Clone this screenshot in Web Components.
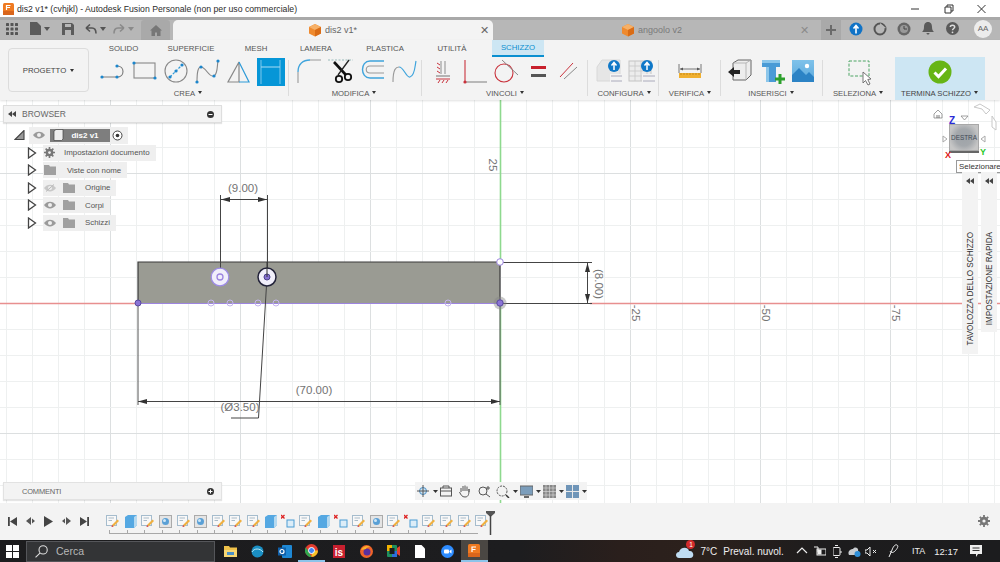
<!DOCTYPE html>
<html lang="it"><head><meta charset="utf-8"><title>Fusion</title>
<style>
html,body{margin:0;padding:0;width:1000px;height:562px;overflow:hidden;background:#fff;font-family:"Liberation Sans",Arial,sans-serif;}
#app{display:flex;flex-direction:column;width:1000px;height:562px}
</style></head><body>
<div id="app">
<title-bar></title-bar>
<tab-bar></tab-bar>
<fusion-toolbar>
  <tool-group label="CREA" w="192" pad="0" lab="182" icons="line rect circle spline tri dim"></tool-group>
  <tool-group label="MODIFICA" w="133" pad="5" lab="130" sep icons="fillet scissors offset wave"></tool-group>
  <tool-group label="VINCOLI" w="166" pad="5" lab="166" sep icons="hatch perp tangent equal parallel"></tool-group>
  <tool-group label="CONFIGURA" w="71" pad="6" lab="72" sep icons="conf1 conf2"></tool-group>
  <tool-group label="VERIFICA" w="62" pad="15" lab="62" sep icons="ruler"></tool-group>
  <tool-group label="INSERISCI" w="102" pad="3" lab="100" sep icons="insert bolt image"></tool-group>
  <tool-group label="SELEZIONA" w="72" pad="19" lab="70" sep icons="select"></tool-group>
  <tool-group label="TERMINA SCHIZZO" w="90" pad="29" lab="89" active icons="finish"></tool-group>
</fusion-toolbar>
<cad-canvas>
  <browser-panel></browser-panel>
  <comments-panel></comments-panel>
  <nav-cube></nav-cube>
  <side-tab label="TAVOLOZZA DELLO SCHIZZO" x="962" h="182" pad="9"></side-tab>
  <side-tab label="IMPOSTAZIONE RAPIDA" x="981" h="160" pad="7"></side-tab>
  <nav-bar></nav-bar>
</cad-canvas>
<time-line></time-line>
<task-bar></task-bar>
</div>
<script>
const def=(n,c)=>customElements.define(n,c);
const shadow=(el,html)=>{el.attachShadow({mode:'open'}).innerHTML=html;};
const FONT='font-family:"Liberation Sans",Arial,sans-serif;';
const B='#2f9bd8',G='#6f6f6f',D='#3fa4dc',R='#c9323c';
const dot=(x,y,r=1.6,c='#1c86cc')=>`<circle cx="${x}" cy="${y}" r="${r}" fill="${c}"/>`;
const ICONS={
line:`<path d="M5 20H20" stroke="#888" stroke-width="1.1" fill="none"/><path d="M20 9C28 9 28 20 20 20" stroke="#777" stroke-width="1.1" fill="none"/>${dot(5,20)}${dot(20,20)}${dot(20,9)}`,
rect:`<rect x="5" y="6" width="21" height="15" fill="none" stroke="#888" stroke-width="1.1"/>${dot(5,6)}${dot(26,21)}`,
circle:`<circle cx="16" cy="14" r="11" fill="none" stroke="#888" stroke-width="1.1"/><path d="M10 20L22 8" stroke="${B}" stroke-width="1.2" stroke-dasharray="2.5 1.5"/>${dot(10,20)}${dot(16,14)}${dot(22,8)}`,
spline:`<path d="M5 25C5 15 6 10 9 10C14 10 17 21 22 19C26 17 25 8 26 4" fill="none" stroke="#888" stroke-width="1.1"/>${dot(5,25)}${dot(9,10)}${dot(22,19)}${dot(26,4)}`,
tri:`<path d="M16 5L5 25H16Z" fill="none" stroke="#888" stroke-width="1.2"/><path d="M16 5L26 25H16" fill="none" stroke="${B}" stroke-width="1.2"/>`,
dim:`<rect x="0" y="1" width="28" height="28" fill="#0696d7"/><path d="M4 3V27M23 3V27" stroke="#7cc8ec" stroke-width="1"/><path d="M4 10H23" stroke="#a8dcf5" stroke-width="1"/>`,
fillet:`<path d="M4 15C4 7 9 3 16 3" fill="none" stroke="${D}" stroke-width="1.3"/><path d="M4 15V26M16 3H27" fill="none" stroke="#999" stroke-width="1.1"/>`,
scissors:`<path d="M2 3H27" stroke="#9bb" stroke-width="1" stroke-dasharray="2 1.5"/><path d="M8 5L20 18" stroke="#111" stroke-width="2.6"/><path d="M23 3L12 18" stroke="#222" stroke-width="1.3"/><circle cx="13" cy="22" r="3.2" fill="none" stroke="#111" stroke-width="1.8"/><circle cx="22" cy="20" r="3.2" fill="none" stroke="#111" stroke-width="1.8"/>`,
offset:`<path d="M27 4H13C3 4 3 21 13 21H27" fill="none" stroke="${D}" stroke-width="1.4"/><path d="M27 9H13C8 9 8 16 13 16H27" fill="none" stroke="#999" stroke-width="1.1"/>`,
wave:`<path d="M4 25C4 12 7 10 10 10" fill="none" stroke="#999" stroke-width="1.1"/><path d="M10 10C15 10 17 21 21 20C26 19 26 8 27 4" fill="none" stroke="${D}" stroke-width="1.2"/>`,
hatch:`<path d="M14 4V17M18 4V17" stroke="#aaa" stroke-width="1.4"/><path d="M10 6L13 8M10 10L13 12M10 14L13 16" stroke="${R}" stroke-width="1"/><path d="M9 19H23" stroke="#888" stroke-width="1.2"/><path d="M9 22H23" stroke="${R}" stroke-width="1"/><path d="M11 26L13 23M15 26L17 23M19 26L21 23" stroke="${R}" stroke-width="1"/>`,
perp:`<path d="M6 3V25" stroke="${R}" stroke-width="1.1"/><path d="M6 25H28" stroke="#888" stroke-width="1.1"/><circle cx="6" cy="25" r="1.6" fill="${R}"/>`,
tangent:`<circle cx="14" cy="16" r="9" fill="none" stroke="${R}" stroke-width="1.1"/><path d="M12 3L28 18" stroke="#888" stroke-width="1"/>`,
equal:`<rect x="9" y="9" width="15" height="3" fill="#c8202c"/><rect x="9" y="17" width="15" height="3" fill="#555"/>`,
parallel:`<path d="M7 20L20 6" stroke="${R}" stroke-width="1"/><path d="M11 22L24 10" stroke="#888" stroke-width="1"/>`,
conf1:`<path d="M3 10L8 3H26V24H3Z" fill="#e6e6e6" stroke="#d8d8d8"/><rect x="16" y="17" width="13" height="10" fill="#f3f3f3"/><path d="M17 19H28M17 24H28" stroke="#aab" stroke-width="1"/><circle cx="20" cy="9" r="6" fill="#0f78c8"/><path d="M20 13V6M17.5 8.5L20 5.5L22.5 8.5" stroke="#fff" stroke-width="1.5" fill="none"/>`,
conf2:`<rect x="3" y="4" width="22" height="20" fill="#ececec" stroke="#c4c4c4"/><path d="M3 9H25M3 14H25M3 19H25M9 4V24M15 4V24M21 4V24" stroke="#c8c8c8" stroke-width=".8"/><rect x="16" y="17" width="13" height="10" fill="#f3f3f3"/><path d="M17 19H29M17 24H29" stroke="#aab" stroke-width="1"/><circle cx="21" cy="9" r="6" fill="#0f78c8"/><path d="M21 13V6M18.5 8.5L21 5.5L23.5 8.5" stroke="#fff" stroke-width="1.5" fill="none"/>`,
ruler:`<path d="M5 7V16M27 7V16M6 12H26" stroke="#777" stroke-width="1"/><path d="M6 12L9 10.5V13.5ZM26 12L23 10.5V13.5Z" fill="#555"/><rect x="5" y="16" width="22" height="5" fill="#f0b030"/><path d="M7 16V18M10 16V18M13 16V18M16 16V18M19 16V18M22 16V18M25 16V18" stroke="#b57c10" stroke-width=".7"/>`,
insert:`<path d="M9 6L14 3H27V18L22 23H9Z" fill="#ededed" stroke="#666" stroke-width="1"/><path d="M9 6H22V23M22 6L27 3" fill="none" stroke="#aaa" stroke-width=".8"/><path d="M4 15L10 10V13H16V17H10V20Z" fill="#222"/>`,
bolt:`<path d="M6 3H24V10H20V25H10V10H6Z" fill="#4a9bd6"/><rect x="6" y="3" width="18" height="3" fill="#8cc6ea"/><rect x="10" y="10" width="3" height="15" fill="#8cc6ea"/><path d="M19 22H29M24 17V27" stroke="#2ca02c" stroke-width="3"/>`,
image:`<defs><linearGradient id="sk" x1="0" y1="0" x2="0" y2="1"><stop offset="0" stop-color="#7fc2ea"/><stop offset="1" stop-color="#5aa8dc"/></linearGradient></defs><rect x="5" y="3" width="22" height="22" fill="url(#sk)"/><circle cx="20" cy="9" r="2.2" fill="#fff"/><path d="M5 25V18L12 11L19 18L22 15L27 20V25Z" fill="#2c83c5"/>`,
select:`<rect x="7" y="4" width="20" height="15" fill="none" stroke="#4da565" stroke-width="1" stroke-dasharray="3 1.6"/><path d="M21 15V26L23.5 23.5L26 28L28 27L25.8 22.5L29 22Z" fill="#fff" stroke="#666" stroke-width=".9"/>`,
finish:`<circle cx="16" cy="15" r="11.5" fill="#67b515"/><path d="M10.5 15.5L14.5 19.5L22 11.5" stroke="#fff" stroke-width="3" fill="none"/>`
};
def('title-bar',class extends HTMLElement{connectedCallback(){shadow(this,`<style>
:host{display:flex;align-items:center;height:17px;background:#fff;flex:none;${FONT}font-size:8.7px;color:#2b2b2b;position:relative}
svg{margin-left:3px;margin-right:3px;flex:none}
span{flex:1;white-space:nowrap}
.c{display:flex;gap:0}
.c svg{margin:0;width:33px;height:14px}
</style><svg width="11" height="12" viewBox="0 0 11 12"><rect width="11" height="12" rx="1.5" fill="#ef7a21"/><rect y="8" width="11" height="4" fill="#d9651b"/><path d="M3.5 7V2.5H7.5M3.5 4.5H7" stroke="#fff" stroke-width="1.2" fill="none"/></svg><span>dis2 v1* (cvhjkl) - Autodesk Fusion Personale (non per uso commerciale)</span>
<div class="c"><svg viewBox="0 0 33 14"><path d="M12 7H20" stroke="#333"/></svg><svg viewBox="0 0 33 14"><path d="M13 5H19V11H13ZM15 5V3H21V9H19" stroke="#333" fill="none"/></svg><svg viewBox="0 0 33 14" style="margin-right:2px"><path d="M12.5 3L20.5 11M20.5 3L12.5 11" stroke="#333"/></svg></div>`);}});
def('tab-bar',class extends HTMLElement{connectedCallback(){
const cube=`<svg width="14" height="14" viewBox="0 0 14 14"><path d="M7 1L13 4V10.5L7 13.5L1 10.5V4Z" fill="#ef8a2e"/><path d="M7 1L13 4L7 7L1 4Z" fill="#f6b067"/><path d="M7 7L13 4V10.5L7 13.5Z" fill="#d96c16"/></svg>`;
const caret=`<svg width="6" height="4" viewBox="0 0 6 4"><path d="M0 0H6L3 4Z" fill="#555"/></svg>`;
shadow(this,`<style>
:host{display:flex;align-items:center;height:23px;flex:none;background:linear-gradient(#a9a9a9 0,#a9a9a9 3px,#b7b7b7 3px);${FONT}color:#666;font-size:9px}
.i{display:flex;align-items:center;gap:3px;flex:none}
.home{width:29px;height:20px;margin:3px 0 0 7px;background:#a9a9a9;display:flex;align-items:center;justify-content:center;flex:none;border-radius:3px 3px 0 0}
.tab{width:320px;height:20px;margin:3px 0 0 3px;display:flex;align-items:center;justify-content:center;gap:3px;background:#f3f3f3;border-radius:5px 5px 0 0;position:relative;flex:none;box-sizing:border-box;padding-right:1px}
.t2{background:transparent;margin-left:0;width:328px;justify-content:flex-start;padding-left:128px}
.x{position:absolute;right:4px;top:3px;font-size:11px;color:#666;line-height:14px}
.t2 .x{right:12px;color:#8a8a8a}
.t2 .t{color:#7a7a7a}
.plus{width:20px;height:20px;margin-top:3px;background:#a9a9a9;display:flex;align-items:center;justify-content:center;flex:none}
.aa{width:18px;height:18px;border-radius:50%;background:#ececec;display:flex;align-items:center;justify-content:center;font-size:8px;color:#666;margin-left:15px;flex:none}
</style>
<div class="i" style="margin-left:6px"><svg width="12" height="12" viewBox="0 0 12 12" fill="#555"><rect width="3" height="3" rx=".6"/><rect x="4.5" width="3" height="3" rx=".6"/><rect x="9" width="3" height="3" rx=".6"/><rect y="4.5" width="3" height="3" rx=".6"/><rect x="4.5" y="4.5" width="3" height="3" rx=".6"/><rect x="9" y="4.5" width="3" height="3" rx=".6"/><rect y="9" width="3" height="3" rx=".6"/><rect x="4.5" y="9" width="3" height="3" rx=".6"/><rect x="9" y="9" width="3" height="3" rx=".6"/></svg></div>
<div class="i" style="margin-left:12px"><svg width="11" height="13" viewBox="0 0 11 13"><path d="M0 0H7L11 4V13H0Z" fill="#5c5c5c"/></svg>${caret}</div>
<div class="i" style="margin-left:12px"><svg width="12" height="12" viewBox="0 0 12 12"><path d="M0 0H10L12 2V12H0Z" fill="#5c5c5c"/><rect x="3" y="1" width="6" height="3" fill="#b7b7b7"/><rect x="3" y="7" width="6" height="5" fill="#b7b7b7"/></svg></div>
<div class="i" style="margin-left:11px"><svg width="12" height="10" viewBox="0 0 12 10"><path d="M1 4H7C10 4 11 6 11 9.5M1 4L5 .5M1 4L5 7.5" fill="none" stroke="#555" stroke-width="1.6"/></svg>${caret}</div>
<div class="i" style="margin-left:7px;opacity:.45"><svg width="12" height="10" viewBox="0 0 12 10"><path d="M11 4H5C2 4 1 6 1 9.5M11 4L7 .5M11 4L7 7.5" fill="none" stroke="#555" stroke-width="1.6"/></svg>${caret}</div>
<div class="home"><svg width="12" height="11" viewBox="0 0 12 11"><path d="M6 0L12 5.5H10.5V11H7V7.5H5V11H1.5V5.5H0Z" fill="#777"/></svg></div>
<div class="tab">${cube}<span class="t">dis2 v1*</span><span class="x">✕</span></div>
<div class="tab t2">${cube}<span class="t">angoolo v2</span><span class="x">✕</span></div>
<div class="plus"><svg width="10" height="10" viewBox="0 0 10 10"><path d="M5 0V10M0 5H10" stroke="#6a6a6a" stroke-width="2"/></svg></div>
<svg style="margin-left:8px;flex:none" width="14" height="14" viewBox="0 0 14 14"><circle cx="7" cy="7" r="6.5" fill="#1173c6"/><path d="M7 11.5V4M4.5 6.5L7 3.5L9.5 6.5" stroke="#fff" stroke-width="1.6" fill="none"/></svg>
<svg style="margin-left:10px;flex:none" width="14" height="14" viewBox="0 0 14 14"><circle cx="7" cy="7" r="5.5" fill="none" stroke="#555" stroke-width="2"/><path d="M7 1L13 6L7 7Z" fill="#b7b7b7"/></svg>
<svg style="margin-left:10px;flex:none" width="14" height="14" viewBox="0 0 14 14"><circle cx="7" cy="7" r="6.5" fill="#666"/><circle cx="7" cy="7" r="4" fill="#999"/><path d="M7 4V7H10" stroke="#444" fill="none"/></svg>
<svg style="margin-left:11px;flex:none" width="12" height="13" viewBox="0 0 12 13"><path d="M6 0C9 0 10 2.5 10 5C10 8 11 9 12 10H0C1 9 2 8 2 5C2 2.5 3 0 6 0ZM4.5 11H7.5C7.5 13 4.5 13 4.5 11Z" fill="#5a5a5a"/></svg>
<svg style="margin-left:12px;flex:none" width="13" height="13" viewBox="0 0 13 13"><circle cx="6.5" cy="6.5" r="6.5" fill="#5a5a5a"/><path d="M4.3 5C4.3 2.5 8.7 2.5 8.7 5C8.7 6.5 6.5 6.5 6.5 8.3" stroke="#ddd" stroke-width="1.5" fill="none"/><circle cx="6.5" cy="10.3" r=".9" fill="#ddd"/></svg>
<div class="aa">AA</div>`);}});
def('fusion-toolbar',class extends HTMLElement{connectedCallback(){
const tabs=[['SOLIDO',53],['SUPERFICIE',82],['MESH',48],['LAMERA',72],['PLASTICA',66],['UTILITÀ',68]];
shadow(this,`<style>
:host{display:flex;height:60px;flex:none;background:#f3f3f3;${FONT}box-shadow:0 1px 2px rgba(0,0,0,.12);position:relative;z-index:2}
.p{width:81px;height:44px;margin:8px 8px 0 8px;box-sizing:border-box;border:1px solid #dcdcdc;border-radius:4px;display:flex;align-items:center;justify-content:center;gap:4px;font-size:7.8px;color:#444;flex:none}
.p i,.s i{display:inline-block;border:2.5px solid transparent;border-top:3px solid #333;border-bottom:0}
.m{display:flex;flex-direction:column}
.t{display:flex;height:17px;align-items:center;font-size:7.8px;color:#555}
.t span{text-align:center;flex:none}
.s{margin-left:6px;width:52px;height:17px;line-height:16px;box-sizing:border-box;background:#cde6f3;border-bottom:2px solid #0a8fd0;color:#0a8fd0;text-align:center;align-self:flex-start}
.g{display:flex;height:43px}
</style><div class="p">PROGETTO <i></i></div><div class="m"><div class="t">${tabs.map(([a,w])=>`<span style="width:${w}px">${a}</span>`).join('')}<span class="s">SCHIZZO</span></div><div class="g"><slot></slot></div></div>`);}});
def('tool-group',class extends HTMLElement{connectedCallback(){
const g=n=>this.getAttribute(n);
const icons=g('icons').split(' ').map(n=>`<svg width="31.5" height="31" viewBox="${n==='dim'?'-2 0 31.5 31':'0 0 31.5 31'}">${ICONS[n]}</svg>`).join('');
shadow(this,`<style>
:host{display:flex;flex-direction:column;width:${g('w')}px;height:43px;box-sizing:border-box;position:relative;flex:none;${FONT}font-size:7.7px;color:#555;${g('active')!==null?'background:#cde6f3;':''}}
.ic{display:flex;height:31px;padding-left:${g('pad')}px}
svg{flex:none;display:block}
.l{width:${g('lab')}px;text-align:center;white-space:nowrap;line-height:11px;color:${g('active')!==null?'#444':'#555'}}
.l i{display:inline-block;border:2.5px solid transparent;border-top:3px solid #333;border-bottom:0;margin-left:3px;vertical-align:2px}
.sep{position:absolute;left:-1px;top:3px;height:36px;width:1px;background:#dcdcdc}
</style>${g('sep')!==null?'<div class="sep"></div>':''}<div class="ic">${icons}</div><div class="l">${g('label')}<i></i></div>`);}});
def('cad-canvas',class extends HTMLElement{connectedCallback(){
let g='';
for(let x=500%26;x<1000;x+=26){const mj=(x-500)%130===0;g+=`<path d="M${x}.5 100V503" stroke="${mj?'#dcdfe0':'#eef0f0'}"/>`;}
for(let y=303%26;y<503;y+=26){if(y<100)continue;const mj=(y-303)%130===0;g+=`<path d="M0 ${y}.5H1000" stroke="${mj?'#dcdfe0':'#eef0f0'}"/>`;}
const T='font-family:\'Liberation Sans\',Arial,sans-serif;font-size:11.5px;fill:#737373';
const lbl=(x,y,s,r=90)=>`<text x="${x}" y="${y}" transform="rotate(${r} ${x} ${y})" text-anchor="middle" style="${T}">${s}</text>`;
const arrow=(x,y,dir)=>{const p={l:`${x},${y} ${x+9},${y-2.5} ${x+9},${y+2.5}`,r:`${x},${y} ${x-9},${y-2.5} ${x-9},${y+2.5}`,u:`${x},${y} ${x-2.5},${y+9} ${x+2.5},${y+9}`,d:`${x},${y} ${x-2.5},${y-9} ${x+2.5},${y-9}`}[dir];return `<polygon points="${p}" fill="#333"/>`;};
const pale=x=>`<circle cx="${x}" cy="303" r="3" fill="none" stroke="#c4b4ee" stroke-width="1"/>`;
shadow(this,`<style>:host{display:block;position:relative;flex:1;min-height:0;background:#fff;overflow:hidden}svg{display:block;position:absolute;left:0;top:0}</style>
<svg width="1000" height="403" viewBox="0 100 1000 403">${g}
<path d="M0 303.5H138" stroke="#e88f8f" stroke-width="1.5"/><path d="M500 303.5H590" stroke="#a7a7a7"/><path d="M590 303.5H1000" stroke="#e88f8f" stroke-width="1.5"/>
<path d="M500.5 100V262M500.5 303V503" stroke="#8ed98e" stroke-width="1.6"/>
${lbl(489,165,'25')}${lbl(632,313,'-25')}${lbl(762,313,'-50')}${lbl(892,313,'-75')}
<rect x="138" y="262" width="362" height="41" fill="#9a9b93"/>
<path d="M138 303V262H500V303" fill="none" stroke="#3a3a3a" stroke-width="1.2"/>
<path d="M138 303.5H500" stroke="#9d85e0" stroke-width="1.2"/>
<path d="M220.5 195V268M267.5 195V268M221 199.5H267" stroke="#444" stroke-width="1"/>${arrow(221,199.5,'l')}${arrow(267,199.5,'r')}
<text x="243" y="192" text-anchor="middle" style="${T}">(9.00)</text>
<path d="M500 262.5H592M500 303.5H592M587.5 263V303" stroke="#444"/>${arrow(587.5,263,'u')}${arrow(587.5,303,'d')}
${lbl(595,284,'(8.00)')}
<path d="M138 303V405M500 303V405" stroke="#555"/><path d="M138 401.5H500" stroke="#444"/>${arrow(138,401.5,'l')}${arrow(500,401.5,'r')}
<text x="314" y="394" text-anchor="middle" style="${T}">(70.00)</text>
<path d="M267 277L258.5 418H231" fill="none" stroke="#444"/>
<text x="240" y="411" text-anchor="middle" style="${T}">(Ø3.50)</text>
<circle cx="220" cy="277" r="8.8" fill="#f1effb" stroke="#9d8be6" stroke-width="1.2"/><circle cx="220" cy="277" r="3" fill="none" stroke="#9d85e0" stroke-width="1.3"/>
<circle cx="267" cy="277" r="9" fill="#f1effb" stroke="#23233a" stroke-width="1.5"/><circle cx="267" cy="277" r="3" fill="#8571d0" stroke="#4b3f8c"/><path d="M267 262V277" stroke="#333"/>
${[211,230,258,276,448].map(pale).join('')}
<circle cx="500" cy="303" r="6.5" fill="#888" fill-opacity=".45"/><circle cx="500" cy="303" r="3.2" fill="#8b74d6" stroke="#5a4aa0"/>
<circle cx="138" cy="303" r="3" fill="#8b74d6" stroke="#5a4aa0"/>
<circle cx="500" cy="262" r="3.3" fill="#fff" stroke="#9d85e0"/>
</svg><slot></slot>`);}});
def('tree-row',class extends HTMLElement{connectedCallback(){
const g=n=>this.getAttribute(n);
const eye=g('eye');
const eyeS=eye?`<svg width="12" height="8" viewBox="0 0 12 8" style="margin-right:7px;${eye==='off'?'opacity:.45':''}"><path d="M0 4C3 -.5 9 -.5 12 4C9 8.5 3 8.5 0 4Z" fill="#9a9a9a"/><circle cx="6" cy="4" r="2" fill="#efefef"/>${eye==='off'?'<path d="M2 7.5L10 .5" stroke="#777"/>':''}</svg>`:'';
const gear=`<svg width="11" height="11" viewBox="0 0 12 12"><circle cx="6" cy="6" r="3.2" fill="none" stroke="#777" stroke-width="2"/><path d="M6 0V12M0 6H12M1.8 1.8L10.2 10.2M10.2 1.8L1.8 10.2" stroke="#777" stroke-width="1.8"/><circle cx="6" cy="6" r="1.5" fill="#efefef"/></svg>`;
const folder=`<svg width="12" height="10" viewBox="0 0 12 10"><path d="M0 0H5L6 1.5H12V10H0Z" fill="#a0a0a0"/></svg>`;
shadow(this,`<style>:host{display:flex;align-items:center;height:17.5px;${FONT}font-size:7.9px;color:#555}
.e{margin-left:24px;flex:none}
.p{display:flex;align-items:center;height:16px;margin-left:6px;padding:0 6px 0 ${g('pl')||7}px;background:#efefef}
.t{margin-left:${g('tx')}px;white-space:nowrap}
</style><svg class="e" width="10" height="12" viewBox="0 0 10 12"><path d="M1.5 1L8.5 6L1.5 11Z" fill="#fff" stroke="#444" stroke-width="1.3"/></svg><div class="p">${eyeS}${g('icon')==='gear'?gear:folder}<span class="t">${g('label')}</span></div>`);}});
def('browser-panel',class extends HTMLElement{connectedCallback(){
shadow(this,`<style>:host{position:absolute;left:3px;top:5px;width:219px;${FONT}font-size:8.5px;color:#666}
.h{display:flex;align-items:center;height:18px;box-sizing:border-box;background:#f3f3f3;border:1px solid #dedede;box-shadow:0 1px 1px rgba(0,0,0,.1);padding:0 7px 0 4px}
.h span{flex:1;margin-left:6px}
.r{display:flex;align-items:center;height:18px;margin-top:3px}
.tri{margin-left:11px}
.w{display:flex;align-items:center;height:17px;margin-left:4px;background:#efefef;padding:0 5px 0 4px}
.n{display:flex;align-items:center;width:60px;height:13px;margin-left:5px;background:#7e7e7e;color:#fff;font-weight:700;font-size:8px;box-sizing:border-box;padding-left:3px}
.n b{flex:1;text-align:center;font-weight:700;padding-right:4px}
.rad{margin-left:2px}
</style><div class="h"><svg width="8" height="6" viewBox="0 0 8 6"><path d="M0 3L4 0V6ZM4 3L8 0V6Z" fill="#444"/></svg><span>BROWSER</span><svg width="7" height="7" viewBox="0 0 7 7"><circle cx="3.5" cy="3.5" r="3.5" fill="#333"/><path d="M1.5 3.5H5.5" stroke="#fff"/></svg></div>
<div class="r"><svg class="tri" width="11" height="10" viewBox="0 0 11 10"><path d="M1 9.5L10 .5V9.5Z" fill="#999" stroke="#444" stroke-width="1.1"/></svg>
<div class="w"><svg width="12" height="8" viewBox="0 0 12 8"><path d="M0 4C3 -.5 9 -.5 12 4C9 8.5 3 8.5 0 4Z" fill="#9a9a9a"/><circle cx="6" cy="4" r="2" fill="#efefef"/></svg><div class="n"><svg width="11" height="12" viewBox="0 0 11 12"><path d="M1 2L3 .5H10V10L8.5 11.5H1Z" fill="#eee" stroke="#444" stroke-width=".7"/></svg><b>dis2 v1</b></div><svg class="rad" width="11" height="11" viewBox="0 0 11 11"><circle cx="5.5" cy="5.5" r="4.5" fill="#fff" stroke="#444"/><circle cx="5.5" cy="5.5" r="1.8" fill="#333"/></svg></div></div>
<tree-row label="Impostazioni documento" icon="gear" tx="9" pl="1"></tree-row>
<tree-row label="Viste con nome" icon="folder" tx="11" pl="1"></tree-row>
<tree-row label="Origine" icon="folder" eye="off" tx="10" pl="1"></tree-row>
<tree-row label="Corpi" icon="folder" eye="on" tx="10" pl="1"></tree-row>
<tree-row label="Schizzi" icon="folder" eye="on" tx="10" pl="1"></tree-row>`);}});
def('comments-panel',class extends HTMLElement{connectedCallback(){shadow(this,`<style>:host{position:absolute;left:3px;top:382px;width:219px;height:18px;box-sizing:border-box;background:#f3f3f3;border:1px solid #e2e2e2;box-shadow:0 1px 1px rgba(0,0,0,.1);display:flex;align-items:center;padding:0 7px 0 18px;${FONT}font-size:7.5px;letter-spacing:-.2px;color:#666}span{flex:1}</style><span>COMMENTI</span><svg width="7" height="7" viewBox="0 0 7 7"><circle cx="3.5" cy="3.5" r="3.5" fill="#333"/><path d="M1.5 3.5H5.5M3.5 1.5V5.5" stroke="#fff"/></svg>`);}});
def('nav-cube',class extends HTMLElement{connectedCallback(){shadow(this,`<style>:host{position:absolute;left:925px;top:0;width:75px;height:73px;${FONT}}
svg{display:block;position:absolute;left:0;top:0}
.f{position:absolute;left:24px;top:24px;width:30px;height:27px;display:flex;align-items:center;justify-content:center;background:radial-gradient(circle,#9ea3a8 0,#a4a8ac 45%,#c6c6c6 80%);border:1px solid #a8a8a8;box-sizing:border-box;font-size:6.4px;color:#3f4a55;box-shadow:0 2px 0 #666}
.tip{position:absolute;left:31px;top:60px;width:44px;height:13px;box-sizing:border-box;background:#fff;border:1px solid #9a9a9a;border-right:0;font-size:7.9px;line-height:11px;padding-left:2px;color:#333;white-space:nowrap}
</style><svg width="75" height="60" viewBox="925 100 75 60">
<path d="M934 114L938 110L942 114V118H934Z" fill="#fff" stroke="#777" stroke-width=".7"/><path d="M937 115V118M939 115V118" stroke="#444" stroke-width=".7"/>
<path d="M961 116H968L964.5 120Z" fill="#fff" stroke="#888" stroke-width=".8"/><path d="M943 136V142L947 139Z" fill="#fff" stroke="#aaa"/><path d="M985 136V142L981 139Z" fill="#fff" stroke="#aaa"/>
<path d="M974 107L980 104L990 110L986 114L982 109Z" fill="#fff" stroke="#c8c8c8"/><path d="M992 116L996 122L996 130L992 127Z" fill="#fff" stroke="#c8c8c8"/>
</svg>
<div class="f">DESTRA</div>
<svg width="75" height="60" viewBox="925 100 75 60" style="z-index:2"><text x="949" y="124" style="font:700 10px 'Liberation Sans',Arial,sans-serif;fill:#2b2bd6">Z</text><text x="980" y="155" style="font:700 9px 'Liberation Sans',Arial,sans-serif;fill:#28c828">Y</text><text x="945" y="158" style="font:700 9px 'Liberation Sans',Arial,sans-serif;fill:#e01818">X</text></svg>
<div class="tip">Selezionare</div>`);}});
def('side-tab',class extends HTMLElement{connectedCallback(){const g=n=>this.getAttribute(n);shadow(this,`<style>:host{position:absolute;left:${g('x')}px;top:72px;width:16px;height:${g('h')}px;background:#f3f3f3;display:flex;flex-direction:column;align-items:center;${FONT}font-size:8.15px;color:#333}
svg{margin-top:6px;flex:none}
.t{flex:1;display:flex;align-items:flex-end}
span{writing-mode:vertical-rl;transform:rotate(180deg);white-space:nowrap;padding-top:${g('pad')}px}
</style><svg width="8" height="6" viewBox="0 0 8 6"><path d="M0 3L4 0V6ZM4 3L8 0V6Z" fill="#444"/></svg><div class="t"><span>${g('label')}</span></div>`);}});
def('nav-bar',class extends HTMLElement{connectedCallback(){
const c=`<svg width="5" height="3" viewBox="0 0 5 3" style="margin:0 3px 0 3px"><path d="M0 0H5L2.5 3Z" fill="#333"/></svg>`;
const sw='fill="none" stroke="#555" stroke-width="1"';
shadow(this,`<style>:host{position:absolute;left:415px;top:382px;width:172px;height:18px;background:#f3f3f3;display:flex;align-items:center;padding-left:1px;box-sizing:border-box;gap:0}svg{flex:none}</style>
<svg width="14" height="14" viewBox="0 0 14 14"><circle cx="7" cy="7" r="3.5" fill="#cfe5f5" stroke="#4a90c8"/><path d="M7 1V13M1 7H13" ${sw}/></svg>${c}
<svg width="12" height="12" viewBox="0 0 12 12" style="margin-left:-1px"><rect x=".5" y="3" width="11" height="8" ${sw}/><path d="M3 3V1H9V3M.5 6H11.5" ${sw}/></svg>
<svg width="14" height="14" viewBox="0 0 14 14" style="margin-left:6px"><path d="M3 8V4M5 7V2M7 7V1.5M9 7V2.5M11 8V5C11 9 11 13 7 13C4 13 3 11 1.5 8" ${sw}/></svg>
<svg width="14" height="14" viewBox="0 0 14 14" style="margin-left:5px"><circle cx="6" cy="7" r="4" ${sw}/><path d="M9 10L13 13M11 2V6M9 4H13" ${sw}/></svg>
<svg width="14" height="14" viewBox="0 0 14 14" style="margin-left:5px"><circle cx="6" cy="7" r="5" fill="none" stroke="#555" stroke-dasharray="2 1"/><path d="M10 11L13 14" stroke="#333" stroke-width="1.5"/></svg>${c}
<svg width="13" height="13" viewBox="0 0 13 13" style="margin-left:-1px"><rect x="0" y="1" width="13" height="9" fill="#7b9dbb" stroke="#666"/><path d="M4 12H9" stroke="#666" stroke-width="2"/></svg>${c}
<svg width="13" height="13" viewBox="0 0 13 13" style="margin-left:-1px"><rect width="13" height="13" fill="#888"/><path d="M3 0V13M6.5 0V13M10 0V13M0 3H13M0 6.5H13M0 10H13" stroke="#ddd" stroke-width=".6"/></svg>${c}
<svg width="13" height="13" viewBox="0 0 13 13" style="margin-left:-1px"><rect width="13" height="13" fill="#6f95b8"/><path d="M6.5 0V13M0 6.5H13" stroke="#e8e8e8"/></svg>${c}`);}});
def('time-line',class extends HTMLElement{connectedCallback(){
const S=`<svg width="15" height="15" viewBox="0 0 15 15"><rect x="1.5" y="1.5" width="10" height="10" fill="#f8f8f8" stroke="#a5bccd"/><path d="M3.5 4H9M3.5 6.5H7" stroke="#aabbc8"/><path d="M7 11L12.5 5.5L14 7L8.5 12.5Z" fill="#f0b040"/><path d="M6.5 13L7 11L8.5 12.5Z" fill="#c23"/></svg>`;
const E=`<svg width="15" height="15" viewBox="0 0 15 15"><path d="M2 3L5 1H14V11L11 14H2Z" fill="#55a8e2"/><path d="M11 3V14L14 11V1Z" fill="#b5d9f0"/></svg>`;
const H=`<svg width="15" height="15" viewBox="0 0 15 15"><rect x="1.5" y="1.5" width="12" height="12" fill="#e4e4e4" stroke="#aaa"/><circle cx="7.5" cy="7.5" r="3.5" fill="#5aa0d6"/><circle cx="6.5" cy="6.5" r="1.5" fill="#cfe7f7"/></svg>`;
const X=`<svg width="15" height="15" viewBox="0 0 15 15"><path d="M0 1L3.5 4.5M3.5 1L0 4.5" stroke="#d22" stroke-width="1.3"/><rect x="6" y="6" width="7" height="7" fill="#dcedf8" stroke="#4a9cd4"/></svg>`;
const m={s:S,e:E,h:H,x:X};
const items='s e s h s h s s s e x s e x s h s x s s s s'.split(' ').map(k=>`<div class="it">${m[k]}</div>`).join('');
shadow(this,`<style>:host{display:flex;height:37px;background:#f3f3f3;flex:none;position:relative;align-items:flex-start}
.pl{display:flex;align-items:center;gap:0;height:36px;margin-left:3px;width:101px;flex:none}
.pl div{width:18px;display:flex;justify-content:center;flex:none}
.w{display:flex;flex-direction:column;margin-top:11px;flex:none}
.its{display:flex}
.it{width:17.57px;height:16px;display:flex;justify-content:center;flex:none}
.r{height:4px;width:369px;margin-left:5px;border-bottom:1px solid #a8a8a8;box-sizing:border-box;background:repeating-linear-gradient(90deg,#a8a8a8 0,#a8a8a8 1px,transparent 1px,transparent 17.57px)}
.m{flex:none;display:block;margin:8px 0 0 -4px}
.gear{position:absolute;right:10px;top:12px}
</style>
<div class="pl"><div><svg width="9" height="9" viewBox="0 0 9 9"><path d="M0 0H1.8V9H0ZM9 0V9L2 4.5Z" fill="#444"/></svg></div><div><svg width="9" height="8" viewBox="0 0 9 8"><path d="M5 0V8L0 4ZM6 1.5L9 4L6 6.5Z" fill="#555"/></svg></div><div><svg width="9" height="11" viewBox="0 0 9 11"><path d="M0 0L9 5.5L0 11Z" fill="#444"/></svg></div><div><svg width="9" height="8" viewBox="0 0 9 8"><path d="M4 0V8L9 4ZM3 1.5L0 4L3 6.5Z" fill="#555"/></svg></div><div><svg width="9" height="9" viewBox="0 0 9 9"><path d="M9 0H7.2V9H9ZM0 0V9L7 4.5Z" fill="#444"/></svg></div></div>
<div class="w"><div class="its">${items}</div><div class="r"></div></div>
<svg class="m" width="9" height="24" viewBox="0 0 9 24"><path d="M0 0H9V2L4.5 6L0 2Z" fill="#555"/><path d="M4.5 4V24" stroke="#444" stroke-width="1.5"/></svg>
<svg class="gear" width="12" height="12" viewBox="0 0 12 12"><circle cx="6" cy="6" r="3.2" fill="none" stroke="#777" stroke-width="2"/><path d="M6 0V12M0 6H12M1.8 1.8L10.2 10.2M10.2 1.8L1.8 10.2" stroke="#777" stroke-width="1.8"/><circle cx="6" cy="6" r="1.6" fill="#f3f3f3"/></svg>`);}});
def('task-bar',class extends HTMLElement{connectedCallback(){
const ic=[
`<svg width="13" height="12" viewBox="0 0 13 12"><path d="M0 1H5L6 2.5H13V12H0Z" fill="#f0c24a"/><rect y="5" width="13" height="7" fill="#f7d774"/><rect x="3" y="7" width="7" height="3" fill="#4a90c8"/></svg>`,
`<svg width="13" height="13" viewBox="0 0 13 13"><circle cx="6.5" cy="6.5" r="6" fill="#1a8fc4"/><path d="M1 7C3 3 9 3 12 7" stroke="#bfeaf5" fill="none"/></svg>`,
`<svg width="14" height="13" viewBox="0 0 14 13"><rect x="4" y="0" width="10" height="13" rx="1" fill="#1e88d4"/><rect x="0" y="2.5" width="8" height="8" fill="#0f5fa8"/><circle cx="4" cy="6.5" r="2" fill="none" stroke="#fff" stroke-width="1.2"/></svg>`,
`<svg width="13" height="13" viewBox="0 0 13 13"><circle cx="6.5" cy="6.5" r="6.5" fill="#e33b2e"/><path d="M6.5 13A6.5 6.5 0 0 1 .8 3.3L4 8.5Z" fill="#2fa84f"/><path d="M6.5 13A6.5 6.5 0 0 0 13 6.5H7Z" fill="#f7c325"/><circle cx="6.5" cy="6.5" r="3" fill="#4285f4" stroke="#fff"/></svg>`,
`<svg width="12" height="13" viewBox="0 0 12 13"><rect width="12" height="13" fill="#c8202f"/><text x="6" y="10.5" text-anchor="middle" style="font:700 10px 'Liberation Sans',Arial,sans-serif;fill:#fff">is</text></svg>`,
`<svg width="13" height="13" viewBox="0 0 13 13"><circle cx="6.5" cy="6.5" r="6.5" fill="#f0642a"/><circle cx="7" cy="7" r="3.5" fill="#5a2f9e"/><path d="M1 5C3 1 8 0 10 2C7 2 6 3 6 4" fill="#fcb42c"/></svg>`,
`<svg width="13" height="12" viewBox="0 0 13 12"><rect width="10" height="12" rx="1" fill="#1f8f5e"/><rect width="5" height="6" fill="#f4b400"/><rect x="5" y="6" width="5" height="6" fill="#2a6fdb"/><path d="M10 3L13 1V11L10 9Z" fill="#e0402f"/><rect x="2.5" y="3" width="5" height="6" fill="#1c1c1c"/></svg>`,
`<svg width="10" height="13" viewBox="0 0 10 13"><path d="M0 0H6.5L10 3.5V13H0Z" fill="#fff"/></svg>`,
`<svg width="13" height="13" viewBox="0 0 13 13"><circle cx="6.5" cy="6.5" r="6.5" fill="#2d8cff"/><rect x="3" y="4.5" width="5" height="4" rx="1" fill="#fff"/><path d="M8.5 6L10.5 4.5V8.5L8.5 7Z" fill="#fff"/></svg>`,
`<svg width="12" height="13" viewBox="0 0 12 13"><rect width="12" height="13" rx="1.5" fill="#ef7a21"/><rect y="9" width="12" height="4" fill="#d9651b"/><path d="M4 8V3H8M4 5.5H7.5" stroke="#fff" stroke-width="1.2" fill="none"/></svg>`];
const tray=`<svg width="12" height="9" viewBox="0 0 12 9" style="margin-left:12px"><path d="M1 6L6 1L11 6" stroke="#eee" fill="none" stroke-width="1.2"/></svg>
<svg width="12" height="11" viewBox="0 0 12 11" style="margin-left:6px"><rect x="3" y="3" width="9" height="6" fill="none" stroke="#eee"/><path d="M0 1H4V6" stroke="#eee" fill="none"/><rect x="3.5" y="3.5" width="4" height="5" fill="#eee"/></svg>
<svg width="9" height="13" viewBox="0 0 9 13" style="margin-left:7px"><rect x="0" y="2.5" width="7" height="8" rx="1" fill="none" stroke="#eee"/><path d="M2 .5H5M2 12.5H5M8 6V8" stroke="#eee"/></svg>
<svg width="13" height="11" viewBox="0 0 13 11" style="margin-left:6px"><path d="M1 9C-1 5 3 3 5 3C7 0 11 2 10 5C13 6 12 9 10 9Z" fill="#c9ccd0"/><circle cx="9.5" cy="8" r="3" fill="#2f8fd8"/></svg>
<svg width="12" height="11" viewBox="0 0 12 11" style="margin-left:4px"><path d="M0 4H2L5 1V10L2 7H0Z" fill="none" stroke="#eee"/><path d="M8 4L11 7M11 4L8 7" stroke="#eee"/></svg>
<svg width="12" height="14" viewBox="0 0 12 14" style="margin-left:10px"><path d="M2 13L5 6C6 3 8 0 10 1C12 2 10 5 8 7C6 9 4 9 3 7" fill="none" stroke="#eee"/></svg>`;
shadow(this,`<style>:host{display:flex;align-items:center;height:22px;flex:none;background:linear-gradient(90deg,#1c1c1e 0,#1d1d1f 52%,#2a1f1c 62%,#2c211c 70%,#1d1c1d 82%,#1c1c1e 100%);${FONT}color:#eee;font-size:9.5px;position:relative}
.w{margin-left:6px;width:20px;display:flex;justify-content:flex-start;flex:none}
.s{width:189px;height:21px;box-sizing:border-box;background:#333436;border:1px solid #55565a;display:flex;align-items:center;flex:none;font-size:10.5px;color:#b8b8b8}
.s svg{margin-left:8px;margin-right:8px}
.i{width:27.1px;height:22px;display:flex;align-items:center;justify-content:center;flex:none;box-sizing:border-box}
.i.u{border-bottom:2px solid #8dc4ea}
.i.a{background:#4a4743;border-bottom:2px solid #8dc4ea}
.ap{margin-left:2px;display:flex}
.wx{margin-left:auto;display:flex;align-items:center;position:relative}
.bd{position:absolute;left:10px;top:-5px;width:9px;height:9px;border-radius:50%;background:#d22b2b;font-size:6.5px;text-align:center;line-height:9px;color:#fff}
.t{white-space:nowrap}
.n{flex:none;margin:0 18px 0 12px}
</style>
<div class="w"><svg width="13" height="13" viewBox="0 0 13 13" fill="#fff"><rect width="6" height="6"/><rect x="7" width="6" height="6"/><rect y="7" width="6" height="6"/><rect x="7" y="7" width="6" height="6"/></svg></div>
<div class="s"><svg width="13" height="13" viewBox="0 0 12 12"><circle cx="7.5" cy="4.5" r="3.8" fill="none" stroke="#ddd" stroke-width="1"/><path d="M4.8 7.2L.5 11.5" stroke="#ddd" stroke-width="1"/></svg><span>Cerca</span></div>
<div class="ap">${ic.map((s,i)=>`<div class="i ${i===3?'u':''} ${i===9?'a':''}">${s}</div>`).join('')}</div>
<div class="wx"><div style="position:relative;display:flex"><svg width="18" height="13" viewBox="0 0 18 13"><path d="M3 13C-1 13 -1 7 3 7C4 2 12 1 13 6C18 5 19 13 14 13Z" fill="#bfdcf2"/></svg><span class="bd">1</span></div>
<span class="t" style="margin-left:6px;font-size:10px">7°C</span><span class="t" style="margin-left:6px;font-size:10px">Preval. nuvol.</span>${tray}
<span class="t" style="margin-left:13px;font-size:9px">ITA</span><span class="t" style="margin-left:9px;font-size:9.5px">12:17</span>
<svg class="n" width="12" height="12" viewBox="0 0 12 12"><path d="M0 0H12V9H8L6 12V9H0Z" fill="#eee"/><path d="M2.5 3H9.5M2.5 5.5H9.5" stroke="#333"/></svg></div>`);}});
</script>
</body></html>
